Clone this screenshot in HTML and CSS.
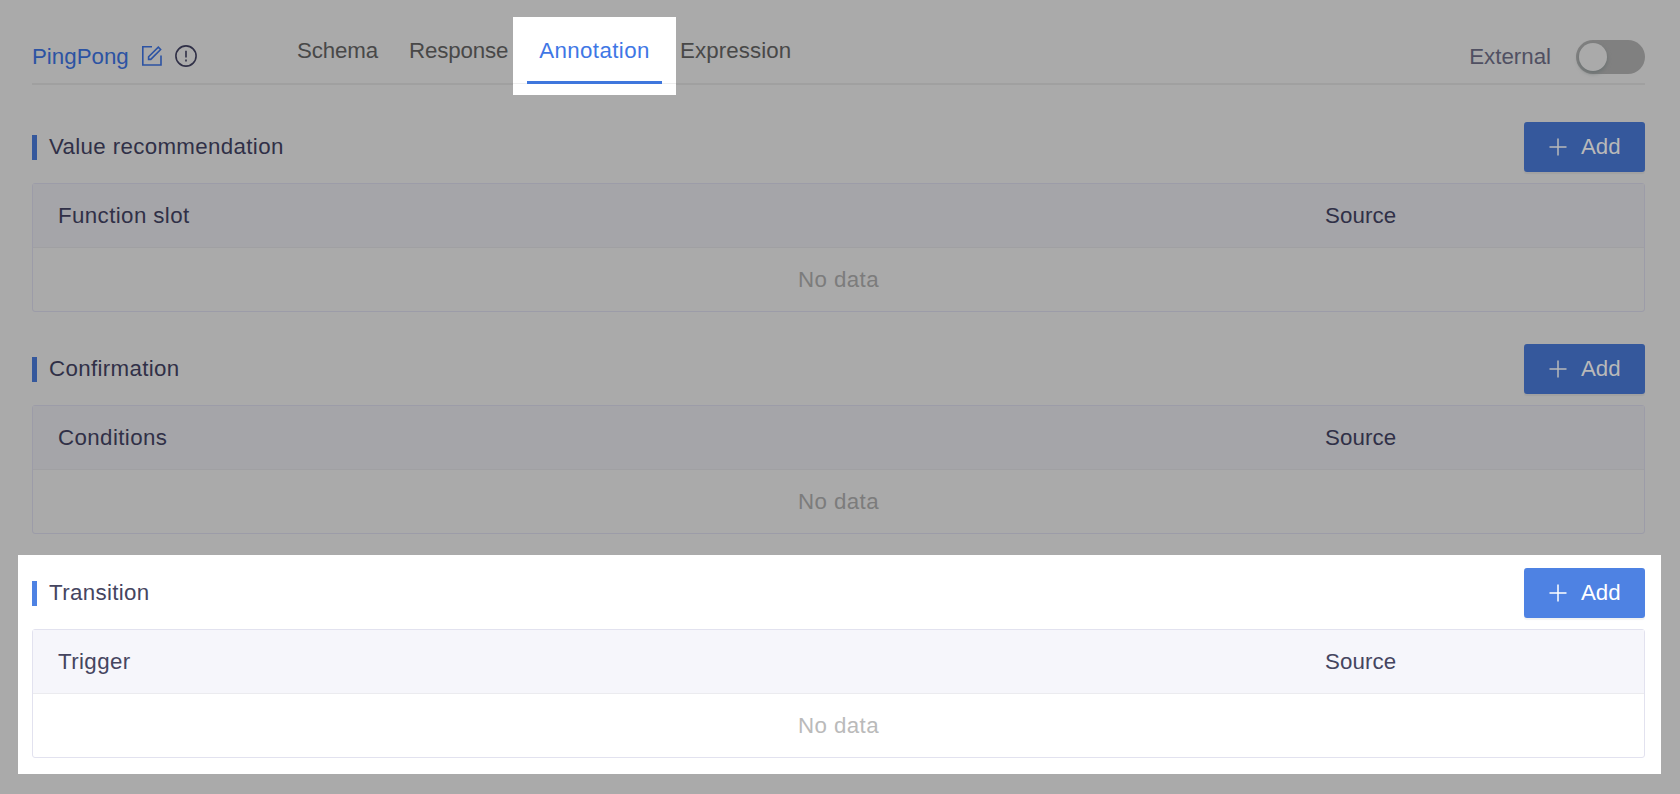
FILE: index.html
```html
<!DOCTYPE html>
<html lang="en">
<head>
<meta charset="utf-8">
<title>PingPong</title>
<link rel="stylesheet" href="styles.css">
</head>
<body>
<main class="page">
  <header class="header">
    <div class="name">
      <span class="name-text">PingPong</span>
      <svg class="edit" width="22" height="22" viewBox="0 0 22 22" fill="none" stroke="currentColor" stroke-width="1.6"><path d="M11 1.8H1.8V20H20V10.5"/><path d="M7.6 14.4V11.8L17.3 2.2L19.6 4.5L9.8 14.4Z"/></svg>
      <svg class="info" width="22" height="22" viewBox="0 0 22 22" fill="none" stroke="currentColor" stroke-width="1.6"><circle cx="11" cy="11" r="10.1"/><path d="M11 5.7V12.6M11 14.4V16.4"/></svg>
    </div>
    <nav class="tabs">
      <a class="tab tab-schema">Schema</a>
      <a class="tab tab-response">Response</a>
      <a class="tab-active"><span class="tab-label">Annotation</span></a>
      <a class="tab tab-expression">Expression</a>
    </nav>
    <div class="external">
      <span class="external-label">External</span>
      <span class="switch"><span class="knob"></span></span>
    </div>
  </header>

  <section class="section">
    <div class="head"><h2 class="title">Value recommendation</h2>
      <button class="add"><svg width="18" height="18" viewBox="0 0 18 18" fill="none" stroke="currentColor" stroke-width="1.5"><path d="M9 .5V17.5M.5 9H17.5"/></svg><span>Add</span></button></div>
    <div class="table">
      <div class="row"><span>Function slot</span><span class="source">Source</span></div>
      <div class="empty">No data</div>
    </div>
  </section>

  <section class="section">
    <div class="head"><h2 class="title">Confirmation</h2>
      <button class="add"><svg width="18" height="18" viewBox="0 0 18 18" fill="none" stroke="currentColor" stroke-width="1.5"><path d="M9 .5V17.5M.5 9H17.5"/></svg><span>Add</span></button></div>
    <div class="table">
      <div class="row"><span>Conditions</span><span class="source">Source</span></div>
      <div class="empty">No data</div>
    </div>
  </section>

  <section class="section spotlight">
    <div class="head"><h2 class="title">Transition</h2>
      <button class="add"><svg width="18" height="18" viewBox="0 0 18 18" fill="none" stroke="currentColor" stroke-width="1.5"><path d="M9 .5V17.5M.5 9H17.5"/></svg><span>Add</span></button></div>
    <div class="table">
      <div class="row"><span>Trigger</span><span class="source">Source</span></div>
      <div class="empty">No data</div>
    </div>
  </section>
</main>
</body>
</html>
```
FILE: styles.css
```css
* { box-sizing: border-box; }

body {
  margin: 0;
  background: #aaaaaa;
  font: 22.3px/26px "Liberation Sans", Arial, sans-serif;
}

.page {
  --blue: #35589c;
  --text: #303047;
  --border: #9c9ca8;
  --row: #a5a5a9;
  --line: #a0a0a3;
  --muted: #7c7c7c;
  --on-blue: #b9b9b9;
  height: 794px;
  padding: 0 35px 0 32px;
  overflow: hidden;
}

.header {
  display: flex;
  height: 85px;
  border-bottom: 2px solid #a0a0a0;
}

.name {
  display: flex;
  width: 265px;
  padding-top: 44px;
  color: #2c53a3;
}
.name-text { width: 96px; }
.edit { margin: 1px 0 0 13px; }
.info { margin: 1px 0 0 12px; color: #303047; }

.tabs { display: flex; flex: 1; }
.tab {
  padding-top: 38px;
  color: #484848;
}
.tab-schema { width: 112px; letter-spacing: -0.15px; }
.tab-response { width: 104px; letter-spacing: -0.15px; }
.tab-expression { padding-left: 4px; letter-spacing: 0.1px; }

.tab-active {
  width: 163px;
  height: 78px;
  margin-top: 17px;
  padding: 0 14px;
  background: linear-gradient(#eeeeee, #eeeeee) 0 66px / 100% 1px no-repeat #ffffff;
  color: #3f77e5;
  z-index: 1;
}
.tab-label {
  display: block;
  height: 67px;
  padding-top: 21px;
  border-bottom: 3px solid #3f77dd;
  text-align: center;
  letter-spacing: 0.4px;
}

.external {
  display: flex;
  padding-top: 40px;
  color: #505062;
}
.external-label { padding: 4px 25px 0 0; }
.switch {
  width: 69px;
  height: 34px;
  padding: 3px;
  border-radius: 17px;
  background: #808080;
}
.knob {
  display: block;
  width: 28px;
  height: 28px;
  border-radius: 50%;
  background: #aaaaaa;
  box-shadow: 0 2px 4px #687070;
}

.section { margin-top: 32px; }
.header + .section { margin-top: 37px; }

.spotlight {
  --blue: #4e82e3;
  --text: #45455f;
  --border: #e2e2ef;
  --row: #f6f6fb;
  --line: #ebebef;
  --muted: #bababa;
  --on-blue: #ffffff;
  height: 219px;
  margin: 21px -16px 0 -14px;
  padding: 13px 16px 0 14px;
  background: #ffffff;
}

.head {
  display: flex;
  justify-content: space-between;
  align-items: center;
  height: 50px;
}
.title {
  height: 25px;
  margin: 0;
  padding-left: 12px;
  border-left: 5px solid var(--blue);
  color: var(--text);
  font-size: 22.3px;
  font-weight: 400;
  line-height: 24px;
  letter-spacing: 0.35px;
}
.add {
  display: flex;
  align-items: center;
  gap: 14px;
  width: 121px;
  height: 50px;
  padding: 0 0 0 25px;
  border: 0;
  border-radius: 3px;
  background: var(--blue);
  box-shadow: 0 2px 1px rgb(0 0 0 / 5%);
  color: var(--on-blue);
  font: inherit;
}

.table {
  height: 129px;
  margin-top: 11px;
  border: 1px solid var(--border);
  border-radius: 3px;
  color: var(--text);
  letter-spacing: 0.4px;
}
.row {
  display: grid;
  grid-template-columns: 1fr 319px;
  align-items: center;
  height: 64px;
  padding-left: 25px;
  border-bottom: 1px solid var(--line);
  background: var(--row);
}
.source { letter-spacing: 0.1px; }
.empty {
  padding-top: 19px;
  color: var(--muted);
  text-align: center;
}
```
